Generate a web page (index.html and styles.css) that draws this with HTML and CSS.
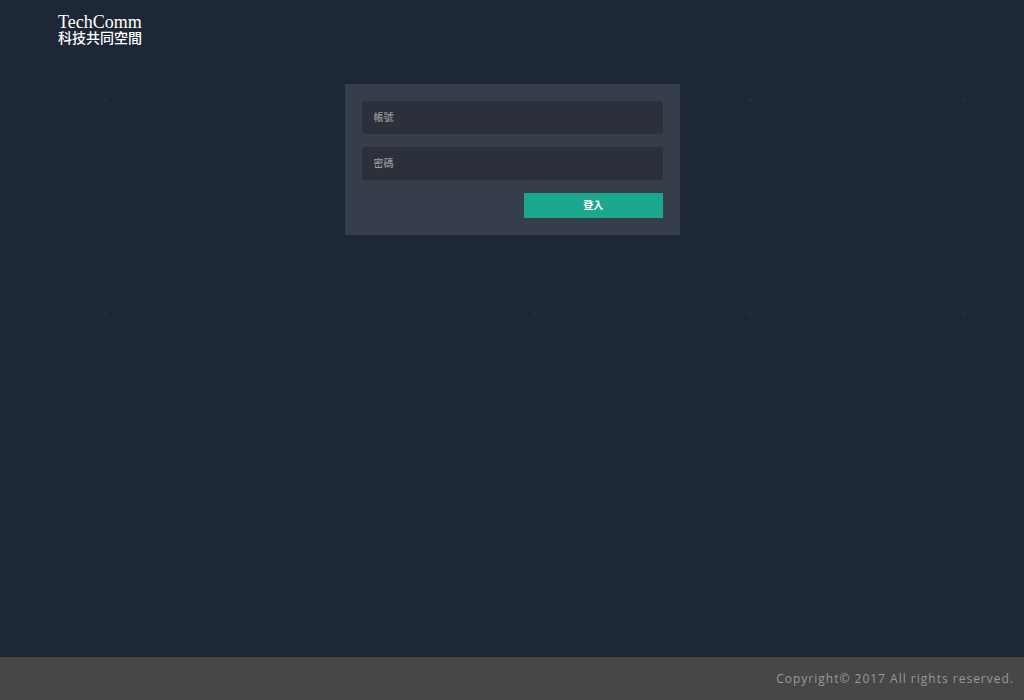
FILE: index.html
```html
<!DOCTYPE html>
<html lang="zh-Hant">
<head>
<meta charset="utf-8">
<meta name="viewport" content="width=device-width, initial-scale=1">
<title>TechComm 科技共同空間</title>
<link rel="stylesheet" href="styles.css">
</head>
<body>
<header class="header">
  <a class="brand" href="#"><span class="brand-en">TechComm</span><span class="brand-zh">科技共同空間</span></a>
</header>
<main class="main">
  <form class="login">
    <input class="field" type="text" placeholder="帳號" aria-label="帳號">
    <input class="field" type="password" placeholder="密碼" aria-label="密碼">
    <button class="submit" type="submit">登入</button>
  </form>
</main>
<footer class="footer">Copyright© 2017 All rights reserved.</footer>
</body>
</html>
```
FILE: styles.css
```css
* { box-sizing: border-box; }
body {
  margin: 0;
  min-height: 100vh;
  display: flex;
  flex-direction: column;
  background-color: #1e2736;
  /* faint repeating specks */
  background-image:
    radial-gradient(circle at 105px 92px, #2a3441 0, transparent 1px),
    radial-gradient(circle at 105px 100px, #2a3441 0, transparent 2px),
    radial-gradient(circle at 124px 120px, #2a3441 0, transparent 1px),
    radial-gradient(circle at 57px 194px, #283240 0, transparent 1px),
    radial-gradient(circle at 182px 158px, #283240 0, transparent 1px);
  background-size: 215px 214px;
  font-family: "Liberation Sans", "Noto Sans CJK TC", sans-serif;
}
.header { display: flex; padding: 14px 58px 0; }
.brand {
  display: flex;
  flex-direction: column;
  color: #fff;
  text-decoration: none;
  font-family: "Liberation Serif", "Noto Sans CJK TC", serif;
}
.brand-en { font-size: 18px; line-height: 16px; }
.brand-zh { font-size: 14px; line-height: 17px; font-weight: 500; }
.main { flex: 1; padding: 37px 16px; }
.login {
  display: flex;
  flex-direction: column;
  gap: 13px;
  max-width: 335px;
  margin: 0 auto;
  padding: 17px;
  background: #373e4b;
}
.field {
  width: 100%;
  height: 33px;
  padding: 0 12px 1px;
  border: 0;
  border-radius: 3px;
  background: #2b303b;
  color: #ccc;
  font: 500 10px "Liberation Sans", "Noto Sans CJK TC", sans-serif;
}
.field::placeholder { color: #999; opacity: 1; }
.submit {
  align-self: flex-end;
  width: 46%;
  height: 25px;
  padding: 0 0 2px;
  border: 0;
  background: #1ba68e;
  color: #fff;
  font: bold 10px "Liberation Sans", "Noto Sans CJK TC", sans-serif;
}
.footer {
  padding: 13px 10px 12px;
  background: #474747;
  color: #999;
  font-family: "Open Sans", sans-serif;
  font-size: 12px;
  font-weight: 500;
  line-height: 18px;
  letter-spacing: 1px;
  text-align: right;
}
```
